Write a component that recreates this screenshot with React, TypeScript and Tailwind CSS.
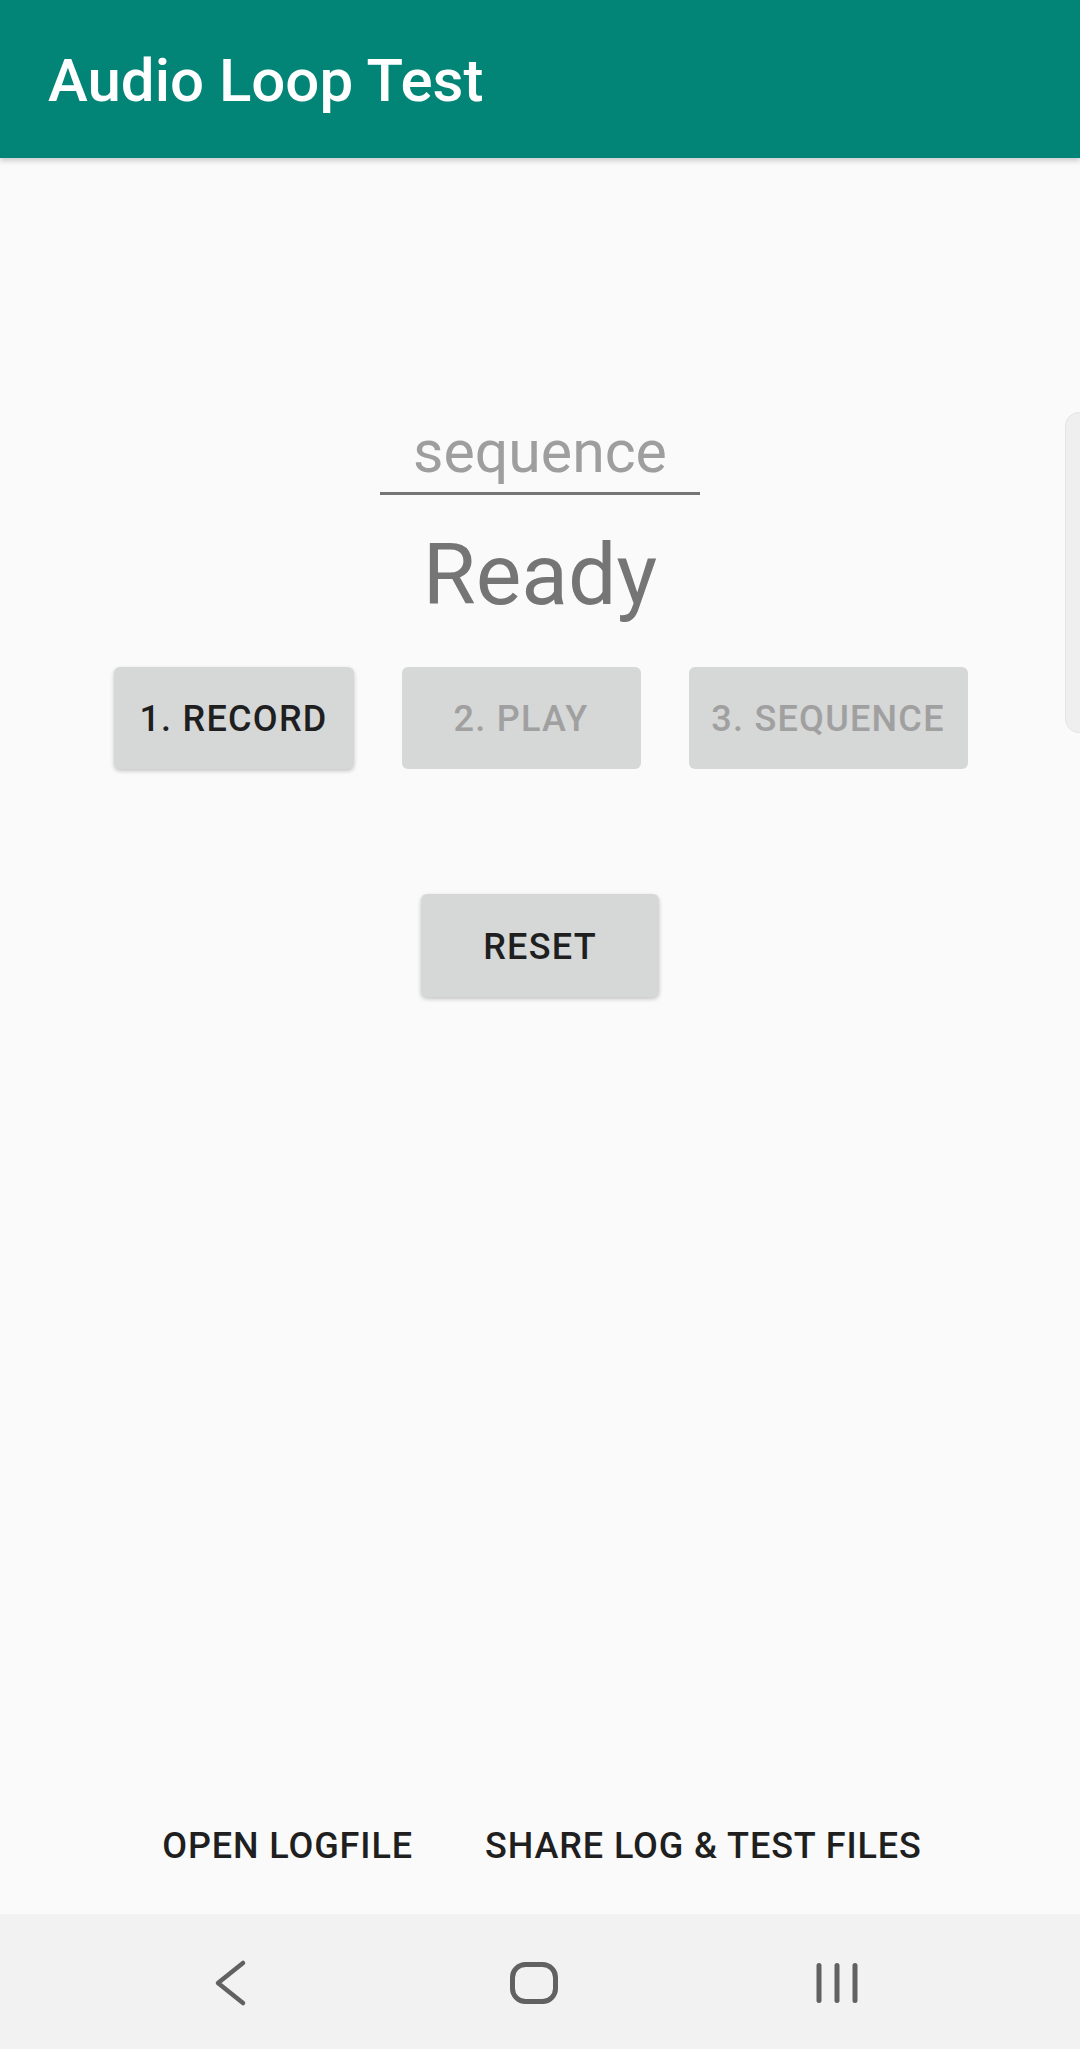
import React from 'react'

const roboto = { fontFamily: 'Roboto, "Liberation Sans", sans-serif' }

function NavBack() {
  return (
    <svg width="60" height="60" viewBox="0 0 60 60" fill="none">
      <path d="M42 10 L17 30 L42 50" stroke="#616161" strokeWidth="4.5" strokeLinecap="round" strokeLinejoin="round" />
    </svg>
  )
}

function NavHome() {
  return (
    <svg width="60" height="60" viewBox="0 0 60 60" fill="none">
      <rect x="8.5" y="11.5" width="43" height="37" rx="13" stroke="#616161" strokeWidth="5" />
    </svg>
  )
}

function NavRecents() {
  return (
    <svg width="60" height="60" viewBox="0 0 60 60" fill="none">
      <path d="M12 12.5 V47.5 M30 12.5 V47.5 M48 12.5 V47.5" stroke="#616161" strokeWidth="5" strokeLinecap="round" />
    </svg>
  )
}

function StepButton({ label, width, enabled }: { label: string; width: string; enabled: boolean }) {
  return (
    <div
      className={`${width} h-[102px] rounded-[6px] bg-[#d6d7d7] flex items-center justify-center pt-[2px] text-[36px] font-medium tracking-[0.035em] leading-none ${
        enabled ? 'text-[#1f1f1f] shadow-[0_2px_4px_rgba(0,0,0,0.22)]' : 'text-[#a0a0a0]'
      }`}
    >
      {label}
    </div>
  )
}

export default function App() {
  return (
    <div className="w-[1080px] h-[2049px] bg-[#fafafa] flex flex-col relative overflow-hidden" style={roboto}>
      {/* app bar */}
      <div className="h-[158px] bg-[#028577] pl-[48px] pt-[51px] shadow-[0_3px_5px_rgba(0,0,0,0.18)] relative z-10">
        <div className="text-white text-[60px] font-medium leading-[60px]">Audio Loop Test</div>
      </div>

      {/* main content */}
      <div className="h-[1756px] flex flex-col items-center">
        <div className="mt-[264px] w-[320px] pb-[11px] border-b-[3px] border-[#757575] text-center text-[59px] leading-[59px] text-[#9e9e9e]">
          sequence
        </div>
        <div className="mt-[37px] text-[86px] leading-[86px] text-[#757575]">Ready</div>

        <div className="mt-[49px] flex gap-[48px] pl-[1px]">
          <StepButton label="1. RECORD" width="w-[240px]" enabled />
          <StepButton label="2. PLAY" width="w-[239px]" enabled={false} />
          <StepButton label="3. SEQUENCE" width="w-[279px]" enabled={false} />
        </div>

        <div className="mt-[125px] w-[238px] h-[103px] rounded-[6px] bg-[#d6d7d7] shadow-[0_2px_4px_rgba(0,0,0,0.22)] flex items-center justify-center pt-[2px] text-[36px] font-medium tracking-[0.035em] leading-none text-[#1f1f1f]">
          RESET
        </div>

        <div className="flex-1" />

        <div className="flex gap-[72px] pb-[50px] pl-[4px] text-[36px] font-medium tracking-[0.025em] leading-[36px] text-[#1f1f1f]">
          <span>OPEN LOGFILE</span>
          <span>SHARE LOG &amp; TEST FILES</span>
        </div>
      </div>

      {/* navigation bar */}
      <div className="h-[135px] bg-[#f2f2f2] flex items-center pl-[201px] gap-[243px] pt-[3px]">
        <NavBack />
        <NavHome />
        <NavRecents />
      </div>

      {/* edge panel handle */}
      <div className="absolute left-[1065px] top-[412px] w-[20px] h-[321px] rounded-l-[14px] bg-[#efefef] border border-[#e4e4e4]" />
    </div>
  )
}
